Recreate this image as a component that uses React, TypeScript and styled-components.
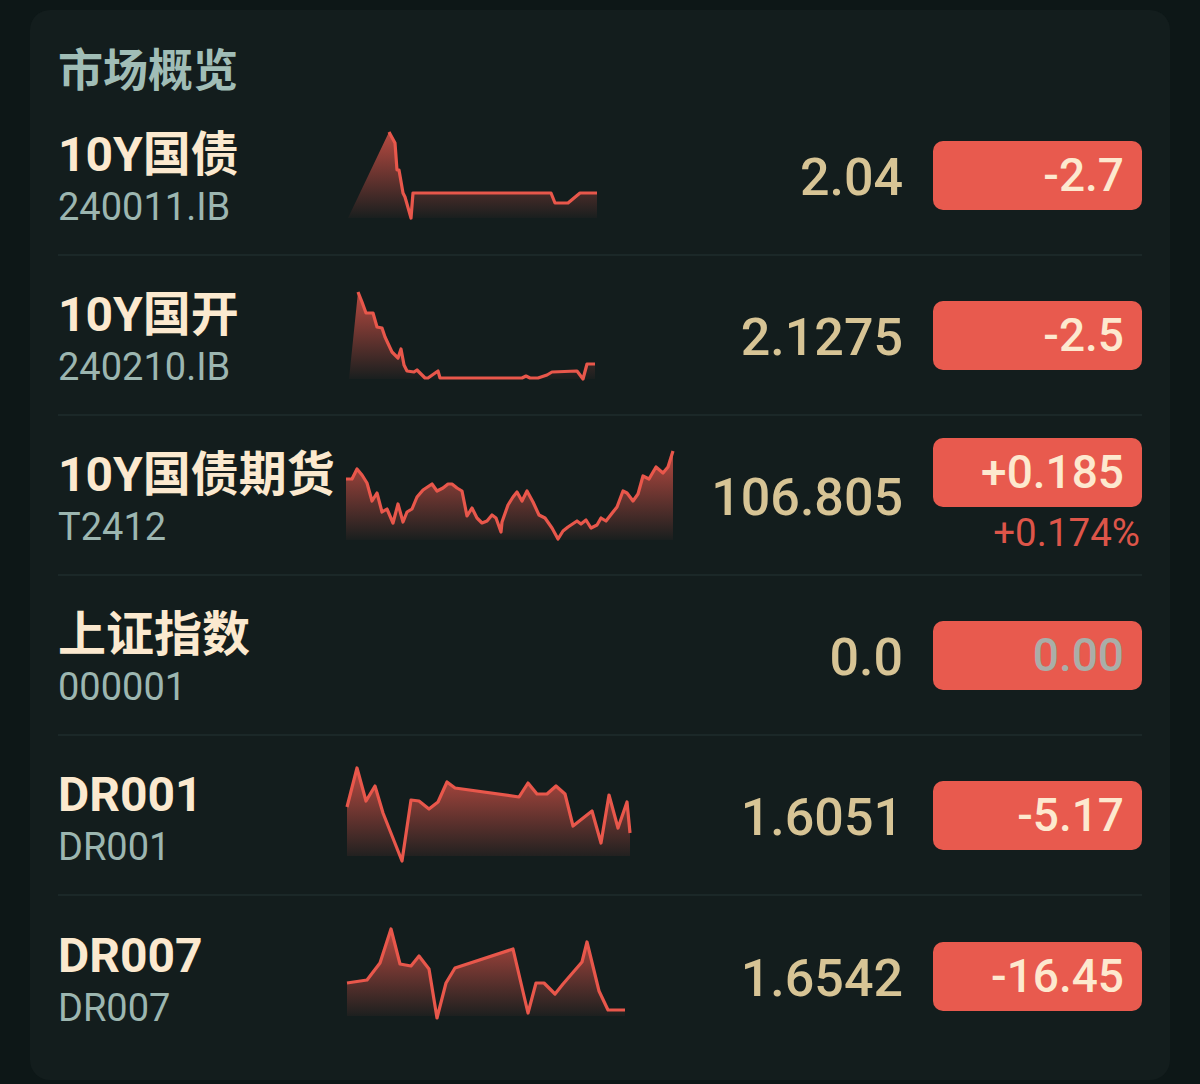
import styled, { createGlobalStyle } from "styled-components";

type Pt = [number, number];

interface Chart {
    base: number;
    start?: Pt;
    points: Pt[];
}

interface Quote {
    name: string;
    code: string;
    value: string;
    change: string;
    pct?: string;
    flat?: boolean;
    chart?: Chart;
}

// chart points are taken in page coordinates, shifted into each row below
const ROW_TOP = 96;
const ROW_H = 160;
const CHART_LEFT = 340;

const quotes: Quote[] = [
    {
        name: "10Y国债",
        code: "240011.IB",
        value: "2.04",
        change: "-2.7",
        chart: {
            base: 218,
            start: [348, 218],
            points: [
                [389, 132], [395, 143], [397, 170], [399, 170], [403, 193], [405, 197],
                [411, 218], [413, 193], [551, 193], [555, 203], [568, 203], [580, 193], [597, 193],
            ],
        },
    },
    {
        name: "10Y国开",
        code: "240210.IB",
        value: "2.1275",
        change: "-2.5",
        chart: {
            base: 379,
            start: [349, 379],
            points: [
                [358, 292], [362, 302], [366, 313], [373, 313], [377, 327], [382, 328],
                [385, 337], [392, 352], [398, 358], [401, 349], [404, 365], [407, 371],
                [414, 372], [417, 370], [425, 378], [428, 378], [438, 371], [440, 378],
                [522, 378], [526, 376], [530, 378], [538, 378], [547, 375], [552, 372],
                [577, 371], [583, 379], [587, 364], [595, 364],
            ],
        },
    },
    {
        name: "10Y国债期货",
        code: "T2412",
        value: "106.805",
        change: "+0.185",
        pct: "+0.174%",
        chart: {
            base: 540,
            points: [
                [346, 479], [352, 479], [357, 469], [362, 475], [367, 483], [372, 501],
                [377, 493], [382, 512], [387, 509], [393, 523], [398, 504], [403, 522],
                [407, 512], [412, 509], [417, 497], [423, 490], [432, 484], [437, 491],
                [443, 488], [448, 484], [452, 484], [457, 488], [462, 491], [467, 516],
                [472, 508], [477, 518], [482, 523], [487, 521], [492, 515], [496, 518],
                [501, 532], [502, 522], [508, 505], [513, 497], [517, 492], [522, 501],
                [527, 491], [533, 502], [539, 515], [545, 518], [552, 528], [558, 539],
                [563, 531], [568, 527], [577, 521], [581, 524], [586, 520], [591, 528],
                [597, 525], [601, 518], [606, 521], [613, 512], [617, 507], [623, 491],
                [627, 493], [633, 501], [638, 494], [643, 476], [649, 479], [656, 467],
                [663, 473], [668, 467], [673, 451],
            ],
        },
    },
    {
        name: "上证指数",
        code: "000001",
        value: "0.0",
        change: "0.00",
        flat: true,
    },
    {
        name: "DR001",
        code: "DR001",
        value: "1.6051",
        change: "-5.17",
        chart: {
            base: 856,
            points: [
                [347, 807], [357, 768], [366, 801], [375, 786], [383, 813], [402, 861],
                [411, 800], [419, 801], [429, 809], [438, 802], [447, 782], [455, 788],
                [519, 797], [528, 783], [537, 794], [547, 794], [556, 786], [565, 794],
                [573, 826], [592, 811], [601, 843], [609, 795], [618, 828], [627, 802],
                [630, 833],
            ],
        },
    },
    {
        name: "DR007",
        code: "DR007",
        value: "1.6542",
        change: "-16.45",
        chart: {
            base: 1015,
            points: [
                [347, 982], [367, 979], [380, 962], [391, 928], [400, 963], [411, 965],
                [419, 955], [429, 968], [437, 1017], [446, 982], [455, 967], [513, 948],
                [528, 1012], [536, 982], [544, 982], [555, 993], [563, 983], [582, 961],
                [587, 941], [599, 990], [608, 1009], [625, 1009],
            ],
        },
    },
];

export default function App() {
    return (
        <>
            <GlobalStyle />
            <Card>
                <Header>市场概览</Header>
                {quotes.map((q, idx) => (
                    <QuoteRow key={q.code} quote={q} index={idx} />
                ))}
            </Card>
        </>
    );
}

const QuoteRow = ({ quote, index }: { quote: Quote; index: number }) => {
    const top = ROW_TOP + index * ROW_H;
    return (
        <Row>
            <NameBox>
                <Name>{quote.name}</Name>
                <Code>{quote.code}</Code>
            </NameBox>
            <ChartBox>
                {quote.chart && <Sparkline id={`spark-${index}`} chart={quote.chart} top={top} />}
            </ChartBox>
            <Value>{quote.value}</Value>
            <ChangeBox>
                <Badge $flat={quote.flat}>{quote.change}</Badge>
                {quote.pct && <Pct>{quote.pct}</Pct>}
            </ChangeBox>
        </Row>
    );
};

const Sparkline = ({ id, chart, top }: { id: string; chart: Chart; top: number }) => {
    const local = (p: Pt) => `${p[0] - CHART_LEFT},${p[1] - top}`;
    const first = chart.points[0];
    const last = chart.points[chart.points.length - 1];
    const startPt: Pt = chart.start ?? [first[0], chart.base];
    const area = [startPt, ...chart.points, [last[0], chart.base] as Pt].map(local).join(" ");
    const line = chart.points.map(local).join(" ");
    return (
        <svg width="340" height="158" viewBox="0 0 340 158">
            <defs>
                <linearGradient id={id} x1="0" y1="0" x2="0" y2="1">
                    <stop offset="0" stopColor="#e8574b" stopOpacity="0.78" />
                    <stop offset="1" stopColor="#e8574b" stopOpacity="0.03" />
                </linearGradient>
            </defs>
            <polygon points={area} fill={`url(#${id})`} />
            <polyline
                points={line}
                fill="none"
                stroke="#e8574b"
                strokeWidth="3.2"
                strokeLinejoin="round"
            />
        </svg>
    );
};

const GlobalStyle = createGlobalStyle`
    html, body {
        margin: 0;
        padding: 0;
        background: #0d1717;
        min-height: 100%;
    }
    body {
        font-family: Roboto, "Noto Sans CJK SC", sans-serif;
        padding: 10px 30px 4px;
    }
`;

const Card = styled.div`
    background: #131d1d;
    border-radius: 20px;
    padding: 0 28px 24px;
`;

const Header = styled.div`
    height: 86px;
    box-sizing: border-box;
    padding-top: 40px;
    font-size: 45px;
    line-height: 44px;
    font-weight: 700;
    color: #a0bdb6;
`;

const Row = styled.div`
    height: 160px;
    box-sizing: border-box;
    border-bottom: 2px solid #1b2828;
    display: grid;
    grid-template-columns: 282px 340px 1fr 209px;
    align-items: center;

    &:last-child {
        border-bottom: none;
    }
`;

const NameBox = styled.div`
    display: flex;
    flex-direction: column;
    white-space: nowrap;
    padding-top: 8px;
`;

const Name = styled.div`
    font-size: 48px;
    line-height: 56px;
    font-weight: 700;
    color: #fbe9cf;
`;

const Code = styled.div`
    font-size: 38px;
    line-height: 48px;
    color: #9cb6b0;
`;

const ChartBox = styled.div`
    height: 158px;
    display: flex;
`;

const Value = styled.div`
    text-align: right;
    padding-right: 30px;
    padding-top: 4px;
    font-size: 52px;
    font-weight: 500;
    color: #d7c495;
`;

const ChangeBox = styled.div`
    display: flex;
    flex-direction: column;
    align-items: flex-end;
`;

const Badge = styled.div<{ $flat?: boolean }>`
    width: 209px;
    height: 69px;
    box-sizing: border-box;
    border-radius: 10px;
    background: #e85a4e;
    text-align: right;
    padding-right: 18px;
    font-size: 46px;
    line-height: 69px;
    font-weight: 500;
    color: ${(p) => (p.$flat ? "#a9aea8" : "#fde9cf")};
`;

const Pct = styled.div`
    margin-top: 6px;
    margin-right: 2px;
    font-size: 38.5px;
    line-height: 40px;
    color: #dd5549;
`;
